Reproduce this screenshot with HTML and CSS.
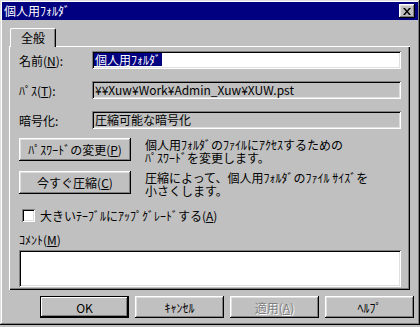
FILE: index.html
```html
<!DOCTYPE html>
<html lang="ja">
<head>
  <meta charset="UTF-8">
  <title>個人用ﾌｫﾙﾀﾞ</title>
  <link rel="stylesheet" href="styles.css">
</head>
<body>

<div class="window">

  <div class="titlebar">
    <span class="title">個人用ﾌｫﾙﾀﾞ</span>
    <span class="close">
      <svg width="8" height="7" viewBox="0 0 8 7">
        <path d="M0 0h2l2 2.5L6 0h2L5 3.5L8 7H6L4 4.5L2 7H0l3-3.5z" fill="#000"/>
      </svg>
    </span>
  </div>

  <div class="sheet">
    <div class="tabs">
      <div class="tab">全般</div>
    </div>

    <div class="panel">

      <div class="row">
        <span class="label">名前(<u>N</u>):</span>
        <div class="field white"><span class="sel">個人用ﾌｫﾙﾀﾞ</span></div>
      </div>

      <div class="row">
        <span class="label">ﾊﾟｽ(<u>T</u>):</span>
        <div class="field">¥¥Xuw¥Work¥Admin_Xuw¥XUW.pst</div>
      </div>

      <div class="row">
        <span class="label">暗号化:</span>
        <div class="field">圧縮可能な暗号化</div>
      </div>

      <div class="action first">
        <div class="btn wide">ﾊﾟｽﾜｰﾄﾞの変更(<u>P</u>)</div>
        <p class="desc">個人用ﾌｫﾙﾀﾞのﾌｧｲﾙにｱｸｾｽするための<br>ﾊﾟｽﾜｰﾄﾞを変更します。</p>
      </div>

      <div class="action">
        <div class="btn wide">今すぐ圧縮(<u>C</u>)</div>
        <p class="desc">圧縮によって、個人用ﾌｫﾙﾀﾞのﾌｧｲﾙ ｻｲｽﾞを<br>小さくします。</p>
      </div>

      <div class="check-row">
        <span class="checkbox"></span>
        <span>大きいﾃｰﾌﾞﾙにｱｯﾌﾟｸﾞﾚｰﾄﾞする(<u>A</u>)</span>
      </div>

      <div class="comment-label">ｺﾒﾝﾄ(<u>M</u>)</div>
      <div class="comment"></div>

    </div>
  </div>

  <div class="footer">
    <div class="btn default">OK</div>
    <div class="btn">ｷｬﾝｾﾙ</div>
    <div class="btn disabled">適用(<u>A</u>)</div>
    <div class="btn">ﾍﾙﾌﾟ</div>
  </div>

</div>

</body>
</html>
```

FILE: styles.css
```css
body {
  margin: 0;
  background-color: #c0c0c0;
  font-family: "Noto Sans CJK JP", "Liberation Sans", sans-serif;
  font-size: 12px;
  color: #000;
}

u {
  text-underline-offset: 1px;
}

.window {
  width: 420px;
  height: 325px;
  box-sizing: border-box;
  padding: 2px;
  background-color: #c0c0c0;
  box-shadow: inset -1px -1px #000, inset 1px 1px #dfdfdf,
              inset -2px -2px #808080, inset 2px 2px #fff;
}

.titlebar {
  height: 18px;
  display: flex;
  align-items: center;
  justify-content: space-between;
  padding: 0 3px 0 2px;
  background-color: #000080;
  color: white;
}

.title {
  line-height: 18px;
}

.close {
  width: 16px;
  height: 14px;
  display: flex;
  align-items: center;
  justify-content: center;
  background-color: #c0c0c0;
  box-shadow: inset -1px -1px #000, inset 1px 1px #fff,
              inset -2px -2px #808080, inset 2px 2px #dfdfdf;
}

.sheet {
  margin: 8px 8px 0 7px;
}

.tabs {
  display: flex;
  padding-left: 1px;
}

.tab {
  position: relative;
  z-index: 1;
  width: 46px;
  height: 19px;
  margin-bottom: -1px;
  box-sizing: border-box;
  padding-top: 1px;
  text-align: center;
  line-height: 16px;
  background-color: #c0c0c0;
  border-top: 1px solid #fff;
  border-left: 1px solid #fff;
  border-right: 1px solid #000;
  border-radius: 2px 2px 0 0;
  box-shadow: inset -1px 0 #808080;
}

.panel {
  box-sizing: border-box;
  height: 244px;
  padding: 5px 9px 0 10px;
  box-shadow: inset 1px 1px #fff, inset -1px -1px #000, inset -2px -2px #808080;
}

.row {
  display: flex;
  align-items: center;
  height: 18px;
  margin-bottom: 12px;
}

.label {
  width: 73px;
  flex: none;
}

.field {
  flex: 1;
  height: 18px;
  box-sizing: border-box;
  padding: 0 3px;
  line-height: 18px;
  white-space: nowrap;
  overflow: hidden;
  box-shadow: inset 1px 1px #808080, inset -1px -1px #fff,
              inset 2px 2px #000, inset -2px -2px #dfdfdf;
}

.field.white {
  background-color: white;
  padding-left: 2px;
}

.sel {
  display: inline-block;
  line-height: 13px;
  padding: 0 1px;
  background-color: #000080;
  color: white;
}

.action {
  display: flex;
  align-items: flex-start;
  margin-top: 7px;
}

.action.first {
  margin-top: -3px;
}

.btn {
  width: 89px;
  height: 22px;
  box-sizing: border-box;
  display: flex;
  align-items: center;
  justify-content: center;
  background-color: #c0c0c0;
  box-shadow: inset -1px -1px #000, inset 1px 1px #fff,
              inset -2px -2px #808080, inset 2px 2px #dfdfdf;
}

.btn.wide {
  width: 112px;
  height: 23px;
  flex: none;
}

.btn.default {
  box-shadow: inset 0 0 0 1px #000, inset -2px -2px #000,
              inset 2px 2px #fff, inset -3px -3px #808080;
}

.btn.disabled {
  color: #808080;
  text-shadow: 1px 1px #fff;
}

.desc {
  margin: 0 0 0 14px;
  line-height: 13px;
  white-space: nowrap;
}

.check-row {
  display: flex;
  align-items: center;
  gap: 5px;
  height: 19px;
  margin-top: 9px;
  padding-left: 3px;
}

.checkbox {
  width: 13px;
  height: 13px;
  background-color: white;
  box-shadow: inset 1px 1px #808080, inset -1px -1px #fff,
              inset 2px 2px #000, inset -2px -2px #dfdfdf;
}

.comment-label {
  height: 14px;
  line-height: 14px;
  margin-top: 8px;
}

.comment {
  height: 37px;
  margin-top: 3px;
  background-color: white;
  box-shadow: inset 1px 1px #808080, inset -1px -1px #fff,
              inset 2px 2px #000, inset -2px -2px #dfdfdf;
}

.footer {
  display: flex;
  justify-content: flex-end;
  gap: 6px;
  margin-top: 6px;
  padding-right: 4px;
}
```
